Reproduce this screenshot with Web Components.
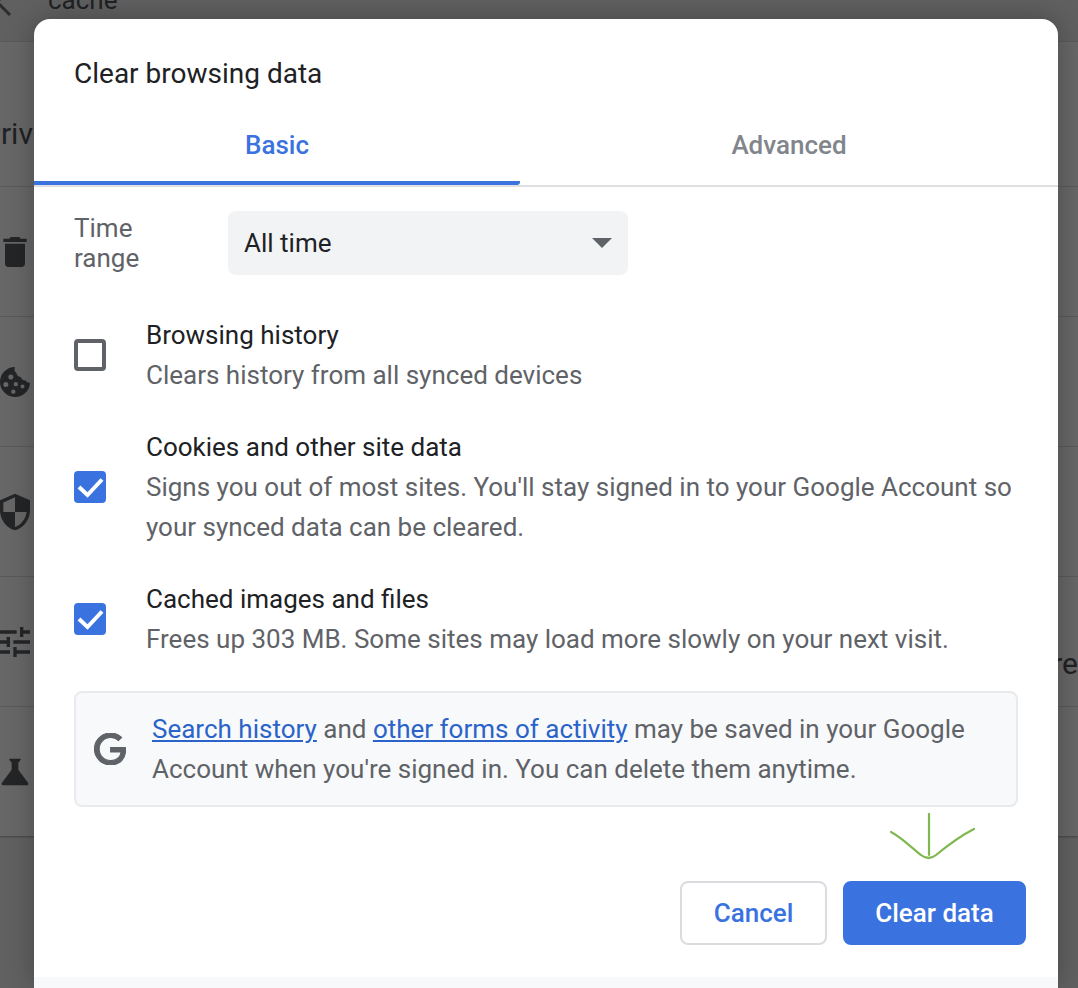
<!DOCTYPE html>
<html lang="en">
<head>
<meta charset="utf-8">
<title>Clear browsing data</title>
<style>
  html, body { margin: 0; height: 988px; overflow: hidden; background: #616161; font-family: Roboto, "Liberation Sans", sans-serif; }
  a { color: inherit; }
</style>
</head>
<body>
<settings-backdrop></settings-backdrop>
<clear-dialog>
  <check-row slot="rows" label="Browsing history">Clears history from all synced devices</check-row>
  <check-row slot="rows" label="Cookies and other site data" checked>Signs you out of most sites. You'll stay signed in to your Google Account so your synced data can be cleared.</check-row>
  <check-row slot="rows" label="Cached images and files" checked>Frees up 303 MB. Some sites may load more slowly on your next visit.</check-row>
</clear-dialog>

<script>
const ICONS = {
  trash: '<path d="M6 19c0 1.1.9 2 2 2h8c1.1 0 2-.9 2-2V7H6v12zM19 4h-3.5l-1-1h-5l-1 1H5v2h14V4z"/>',
  cookie: '<path fill-rule="evenodd" d="M12 3a9 9 0 1 0 9 9.4c-1.2.2-2.2-.3-2.6-1.4-1.4.2-2.6-.6-2.9-2-1.5-.1-2.6-1.1-2.7-2.6C11.9 6 11.3 4.500 12 3zM9.500 7.500a1.500 1.500 0 1 1 0 3 1.500 1.500 0 0 1 0-3zM6.500 12a1.500 1.500 0 1 1 0 3 1.500 1.500 0 0 1 0-3zM12.500 12a1.300 1.300 0 1 1 0 2.600 1.300 1.300 0 0 1 0-2.600zM16.500 13.500a1.200 1.200 0 1 1 0 2.400 1.200 1.200 0 0 1 0-2.400zM11 16.500a1.300 1.300 0 1 1 0 2.600 1.300 1.300 0 0 1 0-2.600z"/>',
  shield: '<path d="M12 1L3 5v6c0 5.550 3.840 10.740 9 12 5.160-1.260 9-6.450 9-12V5l-9-4zm0 10.990h7c-.53 4.120-3.280 7.790-7 8.940V12H5V6.300l7-3.110v8.800z"/>',
  tune: '<path d="M3 17v2h6v-2H3zM3 5v2h10V5H3zm10 16v-2h8v-2h-8v-2h-2v6h2zM7 9v2H3v2h4v2h2V9H7zm14 4v-2H11v2h10zm-6-4h2V7h4V5h-4V3h-2v6z"/>',
  flask: '<path d="M19.800 18.400L14 10.670V6.500l1.350-1.690c.26-.33.03-.81-.39-.81H9.040c-.42 0-.65.48-.39.81L10 6.500v4.170L4.200 18.400c-.49.66-.02 1.600.8 1.600h14c.82 0 1.290-.94.8-1.600z"/>'
};

class SettingsRow extends HTMLElement {
  connectedCallback() {
    this.attachShadow({ mode: 'open' });
    const icon = ICONS[this.getAttribute('icon')];
    this.shadowRoot.innerHTML = `
      <style>
        :host {
          display: flex;
          align-items: center;
          justify-content: space-between;
          height: 129px;
          border-top: 1px solid #5a5a5a;
          color: #202124;
          font-size: 30px;
        }
        svg { width: 40px; height: 40px; margin-left: -5px; fill: #232527; }
        .tail { padding-top: 44px; }
      </style>
      <svg viewBox="0 0 24 24">${icon}</svg>
      <span class="tail"><slot></slot></span>
    `;
  }
}
customElements.define('settings-row', SettingsRow);

class SettingsBackdrop extends HTMLElement {
  connectedCallback() {
    this.attachShadow({ mode: 'open' });
    this.shadowRoot.innerHTML = `
      <style>
        :host { display: block; width: 1078px; height: 988px; overflow: hidden; color: #202124; }
        .card { background: #666766; height: 836px; box-shadow: 0 1px 2px rgba(0,0,0,.3); }
        .top {
          height: 42px;
          display: flex;
          align-items: flex-end;
          background: #5f605f;
          border-bottom: 1px solid #5a5a5a;
          box-sizing: border-box;
          overflow: hidden;
        }
        .top svg { width: 30px; height: 30px; margin: 0 0 24px -14px; fill: none; stroke: #2b2c2d; stroke-width: 3; flex: none; }
        .top span { font-size: 26px; line-height: 30px; margin: 0 0 26px 32px; }
        .heading { height: 144px; box-sizing: border-box; padding-top: 74px; font-size: 30px; line-height: 36px; margin-left: -18px; }
      </style>
      <div class="card">
        <div class="top">
          <svg viewBox="0 0 30 30"><path d="M24 2L11 15l13 13"/></svg>
          <span>cache</span>
        </div>
        <div class="heading">Privacy</div>
        <settings-row icon="trash"></settings-row>
        <settings-row icon="cookie"></settings-row>
        <settings-row icon="shield"></settings-row>
        <settings-row icon="tune">re</settings-row>
        <settings-row icon="flask"></settings-row>
      </div>
    `;
  }
}
customElements.define('settings-backdrop', SettingsBackdrop);

class CheckRow extends HTMLElement {
  connectedCallback() {
    this.attachShadow({ mode: 'open' });
    const checked = this.hasAttribute('checked');
    this.shadowRoot.innerHTML = `
      <style>
        :host { display: flex; align-items: center; gap: 40px; font-size: 26px; line-height: 40px; }
        .box {
          flex: none;
          width: 32px;
          height: 32px;
          box-sizing: border-box;
          border-radius: 4px;
          border: 4px solid #5f6368;
        }
        .box.on { border: 0; background: #3a73e0; }
        .box svg { display: block; }
        .label { color: #202124; }
        .sub { color: #5f6368; }
      </style>
      <span class="box ${checked ? 'on' : ''}">
        ${checked ? '<svg width="32" height="32" viewBox="0 0 32 32"><path d="M5 16l8.500 8L28 8.500" fill="none" stroke="#fff" stroke-width="4"/></svg>' : ''}
      </span>
      <div>
        <div class="label">${this.getAttribute('label') || ''}</div>
        <div class="sub"><slot></slot></div>
      </div>
    `;
  }
}
customElements.define('check-row', CheckRow);

class DialogTabs extends HTMLElement {
  connectedCallback() {
    this.attachShadow({ mode: 'open' });
    this.shadowRoot.innerHTML = `
      <style>
        :host {
          display: grid;
          grid-template-columns: 486px 1fr;
          border-bottom: 2px solid #e0e0e0;
          font-size: 26px;
          font-weight: 500;
          line-height: 40px;
          text-align: center;
        }
        div { height: 80px; box-sizing: border-box; padding-top: 20px; color: #80868b; }
        .active { color: #3a73e0; border-bottom: 4px solid #3a73e0; border-top-right-radius: 0; border-bottom-right-radius: 3px; }
      </style>
      <div class="active">Basic</div>
      <div>Advanced</div>
    `;
  }
}
customElements.define('dialog-tabs', DialogTabs);

class TimeRange extends HTMLElement {
  connectedCallback() {
    this.attachShadow({ mode: 'open' });
    this.shadowRoot.innerHTML = `
      <style>
        :host { display: flex; align-items: center; font-size: 26px; gap: 24px; }
        .label { color: #5f6368; width: 130px; }
        .select {
          width: 400px;
          height: 64px;
          box-sizing: border-box;
          padding: 0 16px;
          display: flex;
          align-items: center;
          justify-content: space-between;
          background: #f1f3f4;
          border-radius: 8px;
          color: #202124;
        }
        svg { display: block; }
      </style>
      <span class="label">Time range</span>
      <div class="select">
        <span>All time</span>
        <svg width="20" height="10" viewBox="0 0 20 10"><path d="M0 0h20L10 10z" fill="#5f6368"/></svg>
      </div>
    `;
  }
}
customElements.define('time-range', TimeRange);

class InfoBox extends HTMLElement {
  connectedCallback() {
    this.attachShadow({ mode: 'open' });
    this.shadowRoot.innerHTML = `
      <style>
        :host {
          display: flex;
          align-items: center;
          gap: 26px;
          box-sizing: border-box;
          height: 116px;
          padding: 0 18px;
          background: #f8f9fa;
          border: 2px solid #e8eaed;
          border-radius: 8px;
          color: #5f6368;
          font-size: 26px;
          line-height: 40px;
        }
        svg { flex: none; width: 32px; height: 32px; fill: #5f6368; stroke: #5f6368; stroke-width: .8; }
        a { color: #2a63c9; }
      </style>
      <svg viewBox="0 0 24 24"><path d="M12.480 10.920v3.280h7.840c-.24 1.840-.853 3.187-1.787 4.133-1.147 1.147-2.933 2.400-6.053 2.400-4.827 0-8.600-3.893-8.600-8.720s3.773-8.720 8.600-8.720c2.600 0 4.507 1.027 5.907 2.347l2.307-2.307C18.747 1.440 16.133 0 12.480 0 5.867 0 .307 5.387.307 12s5.560 12 12.173 12c3.573 0 6.267-1.173 8.373-3.360 2.160-2.160 2.840-5.213 2.840-7.667 0-.76-.053-1.467-.173-2.053H12.480z"/></svg>
      <div><a href="#">Search history</a> and <a href="#">other forms of activity</a> may be saved in your Google Account when you're signed in. You can delete them anytime.</div>
    `;
  }
}
customElements.define('info-box', InfoBox);

class ActionButton extends HTMLElement {
  connectedCallback() {
    this.attachShadow({ mode: 'open' });
    this.shadowRoot.innerHTML = `
      <style>
        :host {
          display: flex;
          align-items: center;
          justify-content: center;
          box-sizing: border-box;
          height: 64px;
          border-radius: 8px;
          border: 2px solid #dadce0;
          background: #fff;
          color: #3a73e0;
          font-size: 26px;
          font-weight: 500;
        }
        :host([primary]) { border-color: #3a73e0; background: #3a73e0; color: #fff; }
      </style>
      <slot></slot>
    `;
  }
}
customElements.define('action-button', ActionButton);

class ClearDialog extends HTMLElement {
  connectedCallback() {
    this.attachShadow({ mode: 'open' });
    this.shadowRoot.innerHTML = `
      <style>
        :host {
          position: absolute;
          left: 34px;
          top: 19px;
          width: 1024px;
          height: 969px;
          background: #fff;
          border-radius: 16px 16px 0 0;
          box-shadow: 0 0 28px rgba(0,0,0,.28);
          overflow: hidden;
        }
        h1 { margin: 0; padding: 35px 40px 11px; font-size: 28px; font-weight: 400; line-height: 40px; color: #202124; }
        .body { padding: 24px 40px 0; display: flex; flex-direction: column; }
        time-range { margin-bottom: 40px; }
        .rows { display: flex; flex-direction: column; gap: 32px; margin-bottom: 32px; }
        .actions { display: flex; justify-content: flex-end; gap: 16px; margin: 74px -8px 32px 0; }
        .cancel { width: 147px; }
        .clear { width: 183px; }
        .footer { height: 20px; background: #f8f9fa; }
        .arrow { position: absolute; left: 856px; top: 794px; }
      </style>
      <h1>Clear browsing data</h1>
      <dialog-tabs></dialog-tabs>
      <div class="body">
        <time-range></time-range>
        <div class="rows"><slot name="rows"></slot></div>
        <info-box></info-box>
        <div class="actions">
          <action-button class="cancel">Cancel</action-button>
          <action-button class="clear" primary>Clear data</action-button>
        </div>
      </div>
      <div class="footer"></div>
      <svg class="arrow" width="86" height="50" viewBox="0 0 86 50" fill="none" stroke="#7fb84e" stroke-width="2.200" stroke-linecap="round">
        <path d="M39 1v41"/>
        <path d="M1 19c10 5 22 17 30 23 5 4 10 4 15 0 11-9 24-19 38-26"/>
      </svg>
    `;
  }
}
customElements.define('clear-dialog', ClearDialog);
</script>
</body>
</html>
